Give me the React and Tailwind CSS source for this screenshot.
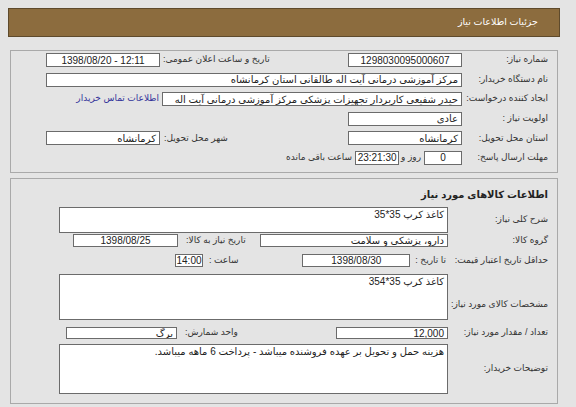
const font = { fontFamily: '"Liberation Sans", "DejaVu Sans", sans-serif' }

function Box({ className = "", children, align = "right", ltr = false }) {
  const a = align === "center" ? "justify-center" : "justify-start"
  return (
    <div className={`bg-white border border-[#6b6b6b] flex items-center ${a} px-[3px] text-[10px] text-[#222] whitespace-nowrap overflow-hidden ${className}`}>
      {ltr ? <span dir="ltr">{children}</span> : children}
    </div>
  )
}

function Label({ className = "", children }) {
  return <div className={`text-[9px] text-[#333] whitespace-nowrap shrink-0 ${className}`}>{children}</div>
}

export default function App() {
  return (
    <div dir="rtl" style={font} className="relative w-[576px] h-[407px] bg-[#e4e4e4] overflow-hidden pt-[8px]">
      {/* header */}
      <div className="ml-[8px] mr-[16px] h-[29px] bg-[#8c6c3e] border border-[#5e4a2c] flex items-center pr-[21px]">
        <span className="text-[9.5px] text-white">جزئیات اطلاعات نیاز</span>
      </div>

      {/* panel 1 */}
      <div className="ml-[10px] mr-[18px] mt-[13px] h-[123px] border border-[#a9a9a9] pt-[2px] pr-[9px] pl-[35px] flex flex-col gap-[5.6px]">
        <div className="flex items-center h-[14px]">
          <Label className="w-[86px]">شماره نیاز:</Label>
          <Box className="w-[114px] h-[14px]" align="center">1298030095000607</Box>
          <div className="flex-1" />
          <Label className="ml-[3px]">تاریخ و ساعت اعلان عمومی:</Label>
          <Box className="w-[114px] h-[14px]" align="center" ltr>1398/08/20 - 12:11</Box>
        </div>
        <div className="flex items-center h-[14px]">
          <Label className="w-[86px]">نام دستگاه خریدار:</Label>
          <Box className="flex-1 h-[14px]">مرکز آموزشی درمانی آیت اله طالقانی استان کرمانشاه</Box>
        </div>
        <div className="flex items-center h-[14px]">
          <Label className="w-[86px]">ایجاد کننده درخواست:</Label>
          <Box className="w-[300px] h-[14px]">حیدر شفیعی کاربردار تجهیزات پزشکی مرکز آموزشی درمانی آیت اله</Box>
          <span className="mr-[3px] text-[9px] text-[#33339a] whitespace-nowrap">اطلاعات تماس خریدار</span>
        </div>
        <div className="flex items-center h-[14px]">
          <Label className="w-[86px]">اولویت نیاز :</Label>
          <Box className="w-[114px] h-[14px]">عادی</Box>
        </div>
        <div className="flex items-center h-[14px]">
          <Label className="w-[86px]">استان محل تحویل:</Label>
          <Box className="w-[114px] h-[14px]">کرمانشاه</Box>
          <div className="flex-1" />
          <Label className="ml-[4px]">شهر محل تحویل:</Label>
          <Box className="w-[114px] h-[14px]">کرمانشاه</Box>
        </div>
        <div className="flex items-center h-[14px]">
          <Label className="w-[86px]">مهلت ارسال پاسخ:</Label>
          <Box className="w-[38px] h-[14px]" align="center">0</Box>
          <Label className="mr-[3px] ml-[2px]">روز و</Label>
          <Box className="w-[44px] h-[14px]" align="center">23:21:30</Box>
          <Label className="mr-[3px]">ساعت باقی مانده</Label>
        </div>
      </div>

      {/* panel 2 */}
      <div className="ml-[10px] mr-[18px] mt-[5px] h-[226px] border border-[#a9a9a9] pr-[9px] pl-[48px] pt-[9px]">
        <div className="text-[10px] font-bold text-[#222] h-[14px] leading-[14px]">اطلاعات کالاهای مورد نیاز</div>

        <div className="flex items-center mt-[5px] h-[26px]">
          <Label className="w-[100px]">شرح کلی نیاز:</Label>
          <div className="flex-1 h-[26px] bg-white border border-[#6b6b6b] px-[3px] text-[10px] text-[#222] leading-[14px]">کاغذ کرپ 35*35</div>
        </div>

        <div className="flex items-center mt-[1px] h-[13px]">
          <Label className="w-[100px]">گروه کالا:</Label>
          <Box className="w-[188px] h-[13px]">دارو، پزشکی و سلامت</Box>
          <div className="flex-1" />
          <Label className="ml-[8px]">تاریخ نیاز به کالا:</Label>
          <Box className="w-[105px] h-[13px]" align="center">1398/08/25</Box>
          <div className="w-[14px]" />
        </div>

        <div className="flex items-center mt-[7px] h-[13px]">
          <Label className="min-w-[98px] ml-[4px]">حداقل تاریخ اعتبار قیمت:</Label>
          <Label className="ml-[5px]">تا تاریخ :</Label>
          <Box className="w-[108px] h-[13px]" align="center">1398/08/30</Box>
          <div className="flex-1" />
          <Label className="ml-[6px]">ساعت :</Label>
          <Box className="w-[28px] h-[13px]" align="center">14:00</Box>
          <div className="w-[116px]" />
        </div>

        <div className="flex items-end mt-[7px] h-[46px]">
          <Label className="w-[100px] mb-[9px]">مشخصات کالای مورد نیاز:</Label>
          <div className="flex-1 h-[46px] bg-white border border-[#6b6b6b] px-[3px] text-[10px] text-[#222] leading-[14px]">کاغذ کرپ 35*354</div>
        </div>

        <div className="flex items-center mt-[7px] h-[12px]">
          <Label className="w-[100px]">تعداد / مقدار مورد نیاز:</Label>
          <Box className="w-[112px] h-[12px]">12,000</Box>
          <div className="flex-1" />
          <Label className="ml-[8px]">واحد شمارش:</Label>
          <Box className="w-[111px] h-[12px]">برگ</Box>
          <div className="w-[7px]" />
        </div>

        <div className="flex items-center mt-[5px] h-[50px]">
          <Label className="w-[100px]">توضیحات خریدار:</Label>
          <div className="flex-1 h-[50px] self-start bg-white border border-[#6b6b6b] px-[3px] text-[10px] text-[#222] leading-[14px]">هزینه حمل و تحویل بر عهده فروشنده میباشد - پرداخت 6 ماهه میباشد.</div>
        </div>
      </div>
    </div>
  )
}
